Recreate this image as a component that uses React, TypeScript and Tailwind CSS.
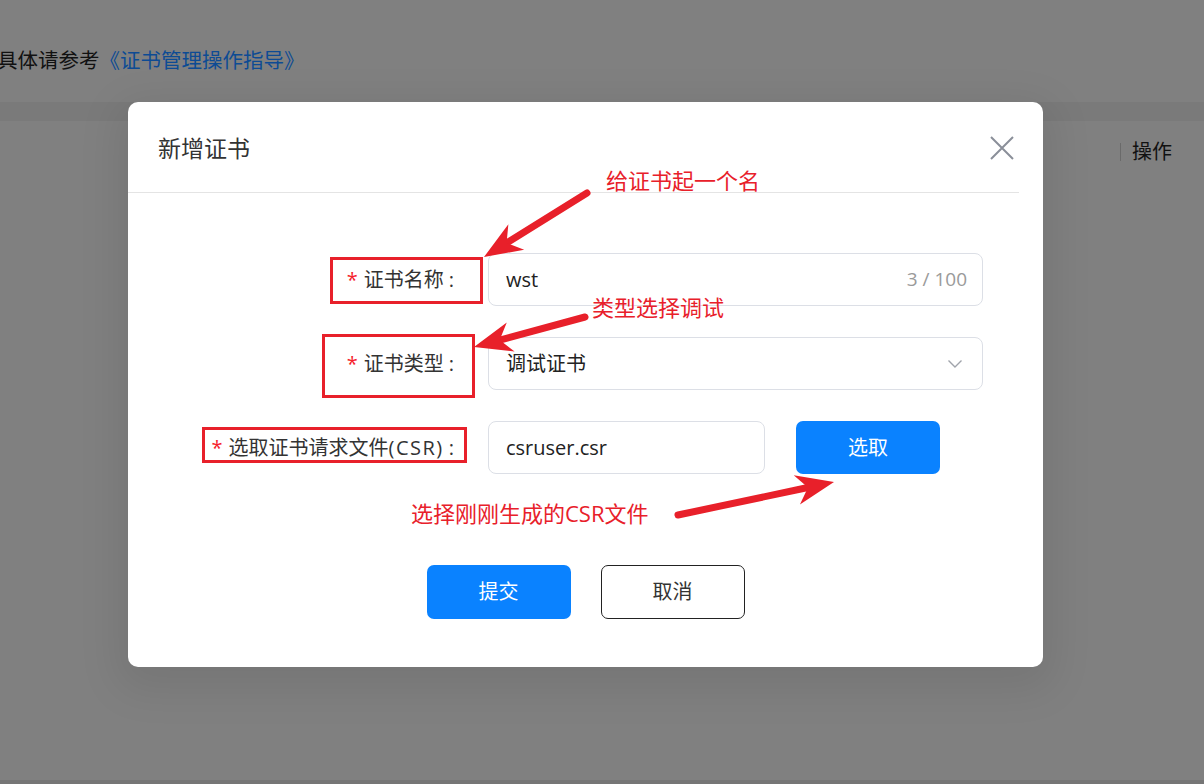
import React from "react";

const FONT = { fontFamily: '"Open Sans", "Noto Sans CJK SC", sans-serif' };
const RED = "#e8202a";

function arrowPoints(tx: number, ty: number, hx: number, hy: number, len: number, wid: number) {
  const dx = hx - tx;
  const dy = hy - ty;
  const d = Math.hypot(dx, dy);
  const ux = dx / d;
  const uy = dy / d;
  const px = -uy;
  const py = ux;
  const bx = hx - ux * len;
  const by = hy - uy * len;
  const nx = hx - ux * len * 0.7;
  const ny = hy - uy * len * 0.7;
  const pts = [
    [hx, hy],
    [bx + (px * wid) / 2, by + (py * wid) / 2],
    [nx, ny],
    [bx - (px * wid) / 2, by - (py * wid) / 2],
  ];
  return { poly: pts.map((p) => p.join(",")).join(" "), lx: nx, ly: ny };
}

function Arrow({ tx, ty, hx, hy }: { tx: number; ty: number; hx: number; hy: number }) {
  const a = arrowPoints(tx, ty, hx, hy, 38, 30);
  return (
    <g>
      <line x1={tx} y1={ty} x2={a.lx} y2={a.ly} stroke={RED} strokeWidth={7} strokeLinecap="round" />
      <polygon points={a.poly} fill={RED} />
    </g>
  );
}

function Label({ children }: { children: React.ReactNode }) {
  return (
    <div className="w-[360px] shrink-0 flex justify-end items-center pr-[34px] text-[20px] leading-[28px] text-[#333]">
      <span className="text-[#f5222d] mr-[6px]">*</span>
      <span>{children}</span>
      <span className="ml-[5px]">:</span>
    </div>
  );
}

export default function App() {
  return (
    <div className="relative w-[1204px] h-[784px] overflow-hidden bg-[#808080]" style={FONT}>
      {/* background page (dimmed) */}
      <div className="flex flex-col h-full">
        <div className="h-[102px] flex items-center">
          <div className="text-[20.5px] leading-[28px] text-[#111] -ml-[3px] mt-[18px] whitespace-nowrap">
            具体请参考<span className="text-[#0d4b94]">《证书管理操作指导》</span>
          </div>
        </div>
        <div className="h-[19px] bg-[#7a7a7a]" />
        <div className="flex-1 flex flex-col">
          <div className="h-[62px] flex items-center justify-end pr-[32px]">
            <div className="w-px h-[18px] bg-[#6a6a6a] mr-[11px]" />
            <span className="text-[20px] leading-[28px] text-[#111]">操作</span>
          </div>
          <div className="flex-1" />
          <div className="h-[4px] bg-[#767676]" />
        </div>
      </div>

      {/* modal */}
      <div className="absolute left-[128px] top-[102px] w-[915px] h-[565px] bg-white rounded-[10px] shadow-[0_12px_40px_12px_rgba(0,0,0,0.08)] flex flex-col">
        <div className="h-[91px] mr-[24px] pl-[30px] pr-[5px] border-b border-[#e4e4e4] flex items-center justify-between">
          <span className="text-[23px] leading-[30px] text-[#333] mt-[1px]">新增证书</span>
          <svg width="24" height="24" viewBox="0 0 24 24" className="mt-[2px]">
            <path d="M1 1 L23 23 M23 1 L1 23" stroke="#8a8f99" strokeWidth="2" fill="none" />
          </svg>
        </div>
        <div className="pt-[60px] flex flex-col gap-[31px]">
          <div className="flex h-[53px]">
            <Label>证书名称</Label>
            <div className="w-[495px] h-[53px] border border-[#dcdfe6] rounded-[8px] flex items-center justify-between pl-[17px] pr-[15px]">
              <span className="text-[20px] text-[#222]">wst</span>
              <span className="text-[19px] text-[#9a9a9a]">3 / 100</span>
            </div>
          </div>
          <div className="flex h-[53px]">
            <Label>证书类型</Label>
            <div className="w-[495px] h-[53px] border border-[#dcdfe6] rounded-[8px] flex items-center justify-between pl-[17px] pr-[19px]">
              <span className="text-[20px] text-[#222]">调试证书</span>
              <svg width="16" height="10" viewBox="0 0 16 10">
                <path d="M1.5 1.5 L8 8 L14.5 1.5" stroke="#a0a4ab" strokeWidth="1.4" fill="none" />
              </svg>
            </div>
          </div>
          <div className="flex h-[53px]">
            <Label>
              选取证书请求文件<span className="tracking-[1.5px]">(CSR)</span>
            </Label>
            <div className="w-[277px] h-[53px] border border-[#dcdfe6] rounded-[8px] flex items-center pl-[17px]">
              <span className="text-[20px] text-[#222]">csruser.csr</span>
            </div>
            <button className="ml-[31px] w-[144px] h-[53px] rounded-[7px] bg-[#0a82ff] text-white text-[20px]">选取</button>
          </div>
        </div>
        <div className="mt-[91px] flex justify-center gap-[30px]">
          <button className="w-[144px] h-[54px] rounded-[7px] bg-[#0a82ff] text-white text-[20px]">提交</button>
          <button className="w-[144px] h-[54px] rounded-[7px] bg-white border border-[#222] text-[#333] text-[20px]">取消</button>
        </div>
      </div>

      {/* annotations */}
      <div className="absolute left-[330px] top-[257px] w-[153px] h-[47px] border-[3px] border-[#e8202a]" />
      <div className="absolute left-[322px] top-[334px] w-[153px] h-[64px] border-[3px] border-[#e8202a]" />
      <div className="absolute left-[202px] top-[427px] w-[265px] h-[36px] border-[3px] border-[#e8202a]" />

      <div className="absolute left-[606px] top-[165px] text-[22px] leading-[30px] text-[#e8202a] whitespace-nowrap">给证书起一个名</div>
      <div className="absolute left-[592px] top-[292px] text-[22px] leading-[30px] text-[#e8202a] whitespace-nowrap">类型选择调试</div>
      <div className="absolute left-[411px] top-[498px] text-[22px] leading-[30px] text-[#e8202a] whitespace-nowrap">选择刚刚生成的CSR文件</div>

      <svg className="absolute left-0 top-0 pointer-events-none" width="1204" height="784">
        <Arrow tx={587} ty={193} hx={484} hy={257} />
        <Arrow tx={585} ty={317} hx={474} hy={347} />
        <Arrow tx={678} ty={515} hx={834} hy={482} />
      </svg>
    </div>
  );
}
